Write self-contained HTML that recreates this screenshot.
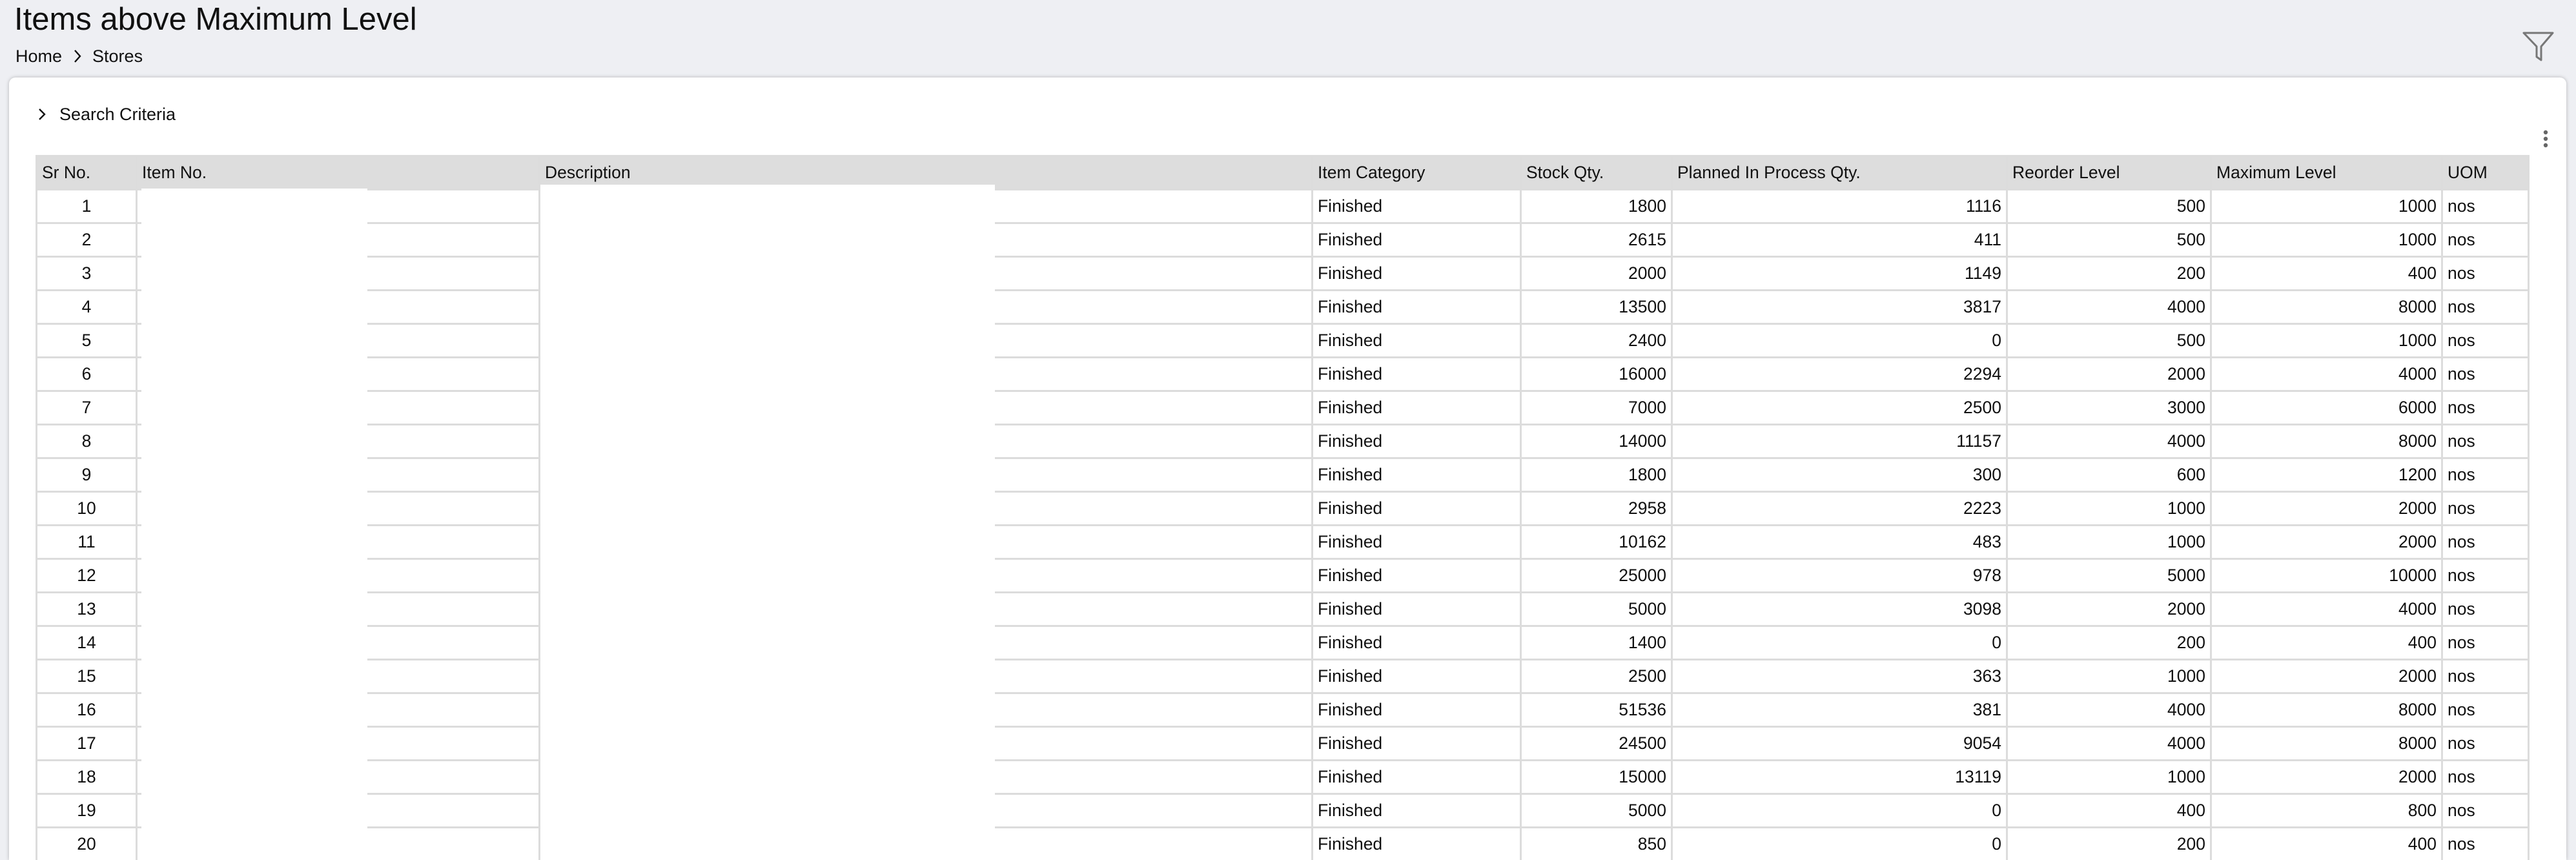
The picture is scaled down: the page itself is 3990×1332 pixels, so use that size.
<!DOCTYPE html>
<html><head><meta charset="utf-8"><style>
html,body{margin:0;padding:0;width:3990px;height:1332px;overflow:hidden;}
body{background:#eeeff3;font-family:"Liberation Sans",sans-serif;color:#111;position:relative;}
.title{position:absolute;left:22px;top:2px;font-size:49px;line-height:56px;}
.bc{position:absolute;left:24px;top:70px;font-size:27px;line-height:34px;}
.card{position:absolute;left:14px;top:120px;width:3961px;height:1212px;background:#fff;border-radius:10px 10px 0 0;box-shadow:0 0 6px rgba(0,0,0,.25);}
.sc{position:absolute;left:56px;top:160px;font-size:27px;line-height:34px;}
table{position:absolute;left:55px;top:240px;width:3860px;table-layout:fixed;border-collapse:collapse;font-size:26.5px;}
td,th{border:3px solid #dcdcdc;height:49px;padding:0 7px;font-weight:normal;text-align:left;white-space:nowrap;overflow:hidden;}
th{background:#dddddd;}
td.c{text-align:center;}
td.r{text-align:right;}
.w{position:absolute;background:#fff;}
</style></head><body>
<div class="title">Items above Maximum Level</div>
<div class="bc">Home <svg width="20" height="24" viewBox="0 0 20 24" style="vertical-align:-3px;margin:0 6px"><path d="M6 3 L14 12 L6 21" fill="none" stroke="#111" stroke-width="2.4"/></svg> Stores</div>
<svg style="position:absolute;left:3907px;top:48px" width="50" height="48" viewBox="0 0 50 48"><path d="M2 3 H47 L29 24 V45 L22 40 V24 Z" fill="none" stroke="#777" stroke-width="3" stroke-linejoin="round"/></svg>
<div class="card"></div>
<div class="sc"><svg width="20" height="24" viewBox="0 0 20 24" style="vertical-align:-3px;margin-right:16px"><path d="M5 4 L13 12 L5 20" fill="none" stroke="#111" stroke-width="2.4"/></svg>Search Criteria</div>
<svg style="position:absolute;left:3936px;top:200px" width="14" height="30" viewBox="0 0 14 30"><circle cx="7" cy="5" r="3.2" fill="#666"/><circle cx="7" cy="15" r="3.2" fill="#666"/><circle cx="7" cy="25" r="3.2" fill="#666"/></svg>
<table>
<colgroup><col style="width:155px"><col style="width:624px"><col style="width:1197px"><col style="width:323px"><col style="width:234px"><col style="width:519px"><col style="width:316px"><col style="width:358px"><col style="width:134px"></colgroup>
<tr><th>Sr No.</th><th>Item No.</th><th>Description</th><th>Item Category</th><th>Stock Qty.</th><th>Planned In Process Qty.</th><th>Reorder Level</th><th>Maximum Level</th><th>UOM</th></tr>
<tr><td class="c">1</td><td></td><td></td><td>Finished</td><td class="r">1800</td><td class="r">1116</td><td class="r">500</td><td class="r">1000</td><td>nos</td></tr>
<tr><td class="c">2</td><td></td><td></td><td>Finished</td><td class="r">2615</td><td class="r">411</td><td class="r">500</td><td class="r">1000</td><td>nos</td></tr>
<tr><td class="c">3</td><td></td><td></td><td>Finished</td><td class="r">2000</td><td class="r">1149</td><td class="r">200</td><td class="r">400</td><td>nos</td></tr>
<tr><td class="c">4</td><td></td><td></td><td>Finished</td><td class="r">13500</td><td class="r">3817</td><td class="r">4000</td><td class="r">8000</td><td>nos</td></tr>
<tr><td class="c">5</td><td></td><td></td><td>Finished</td><td class="r">2400</td><td class="r">0</td><td class="r">500</td><td class="r">1000</td><td>nos</td></tr>
<tr><td class="c">6</td><td></td><td></td><td>Finished</td><td class="r">16000</td><td class="r">2294</td><td class="r">2000</td><td class="r">4000</td><td>nos</td></tr>
<tr><td class="c">7</td><td></td><td></td><td>Finished</td><td class="r">7000</td><td class="r">2500</td><td class="r">3000</td><td class="r">6000</td><td>nos</td></tr>
<tr><td class="c">8</td><td></td><td></td><td>Finished</td><td class="r">14000</td><td class="r">11157</td><td class="r">4000</td><td class="r">8000</td><td>nos</td></tr>
<tr><td class="c">9</td><td></td><td></td><td>Finished</td><td class="r">1800</td><td class="r">300</td><td class="r">600</td><td class="r">1200</td><td>nos</td></tr>
<tr><td class="c">10</td><td></td><td></td><td>Finished</td><td class="r">2958</td><td class="r">2223</td><td class="r">1000</td><td class="r">2000</td><td>nos</td></tr>
<tr><td class="c">11</td><td></td><td></td><td>Finished</td><td class="r">10162</td><td class="r">483</td><td class="r">1000</td><td class="r">2000</td><td>nos</td></tr>
<tr><td class="c">12</td><td></td><td></td><td>Finished</td><td class="r">25000</td><td class="r">978</td><td class="r">5000</td><td class="r">10000</td><td>nos</td></tr>
<tr><td class="c">13</td><td></td><td></td><td>Finished</td><td class="r">5000</td><td class="r">3098</td><td class="r">2000</td><td class="r">4000</td><td>nos</td></tr>
<tr><td class="c">14</td><td></td><td></td><td>Finished</td><td class="r">1400</td><td class="r">0</td><td class="r">200</td><td class="r">400</td><td>nos</td></tr>
<tr><td class="c">15</td><td></td><td></td><td>Finished</td><td class="r">2500</td><td class="r">363</td><td class="r">1000</td><td class="r">2000</td><td>nos</td></tr>
<tr><td class="c">16</td><td></td><td></td><td>Finished</td><td class="r">51536</td><td class="r">381</td><td class="r">4000</td><td class="r">8000</td><td>nos</td></tr>
<tr><td class="c">17</td><td></td><td></td><td>Finished</td><td class="r">24500</td><td class="r">9054</td><td class="r">4000</td><td class="r">8000</td><td>nos</td></tr>
<tr><td class="c">18</td><td></td><td></td><td>Finished</td><td class="r">15000</td><td class="r">13119</td><td class="r">1000</td><td class="r">2000</td><td>nos</td></tr>
<tr><td class="c">19</td><td></td><td></td><td>Finished</td><td class="r">5000</td><td class="r">0</td><td class="r">400</td><td class="r">800</td><td>nos</td></tr>
<tr><td class="c">20</td><td></td><td></td><td>Finished</td><td class="r">850</td><td class="r">0</td><td class="r">200</td><td class="r">400</td><td>nos</td></tr>
</table>
<div class="w" style="left:219px;top:292px;width:350px;height:1040px"></div>
<div class="w" style="left:837px;top:286px;width:704px;height:1046px"></div>
</body></html>
